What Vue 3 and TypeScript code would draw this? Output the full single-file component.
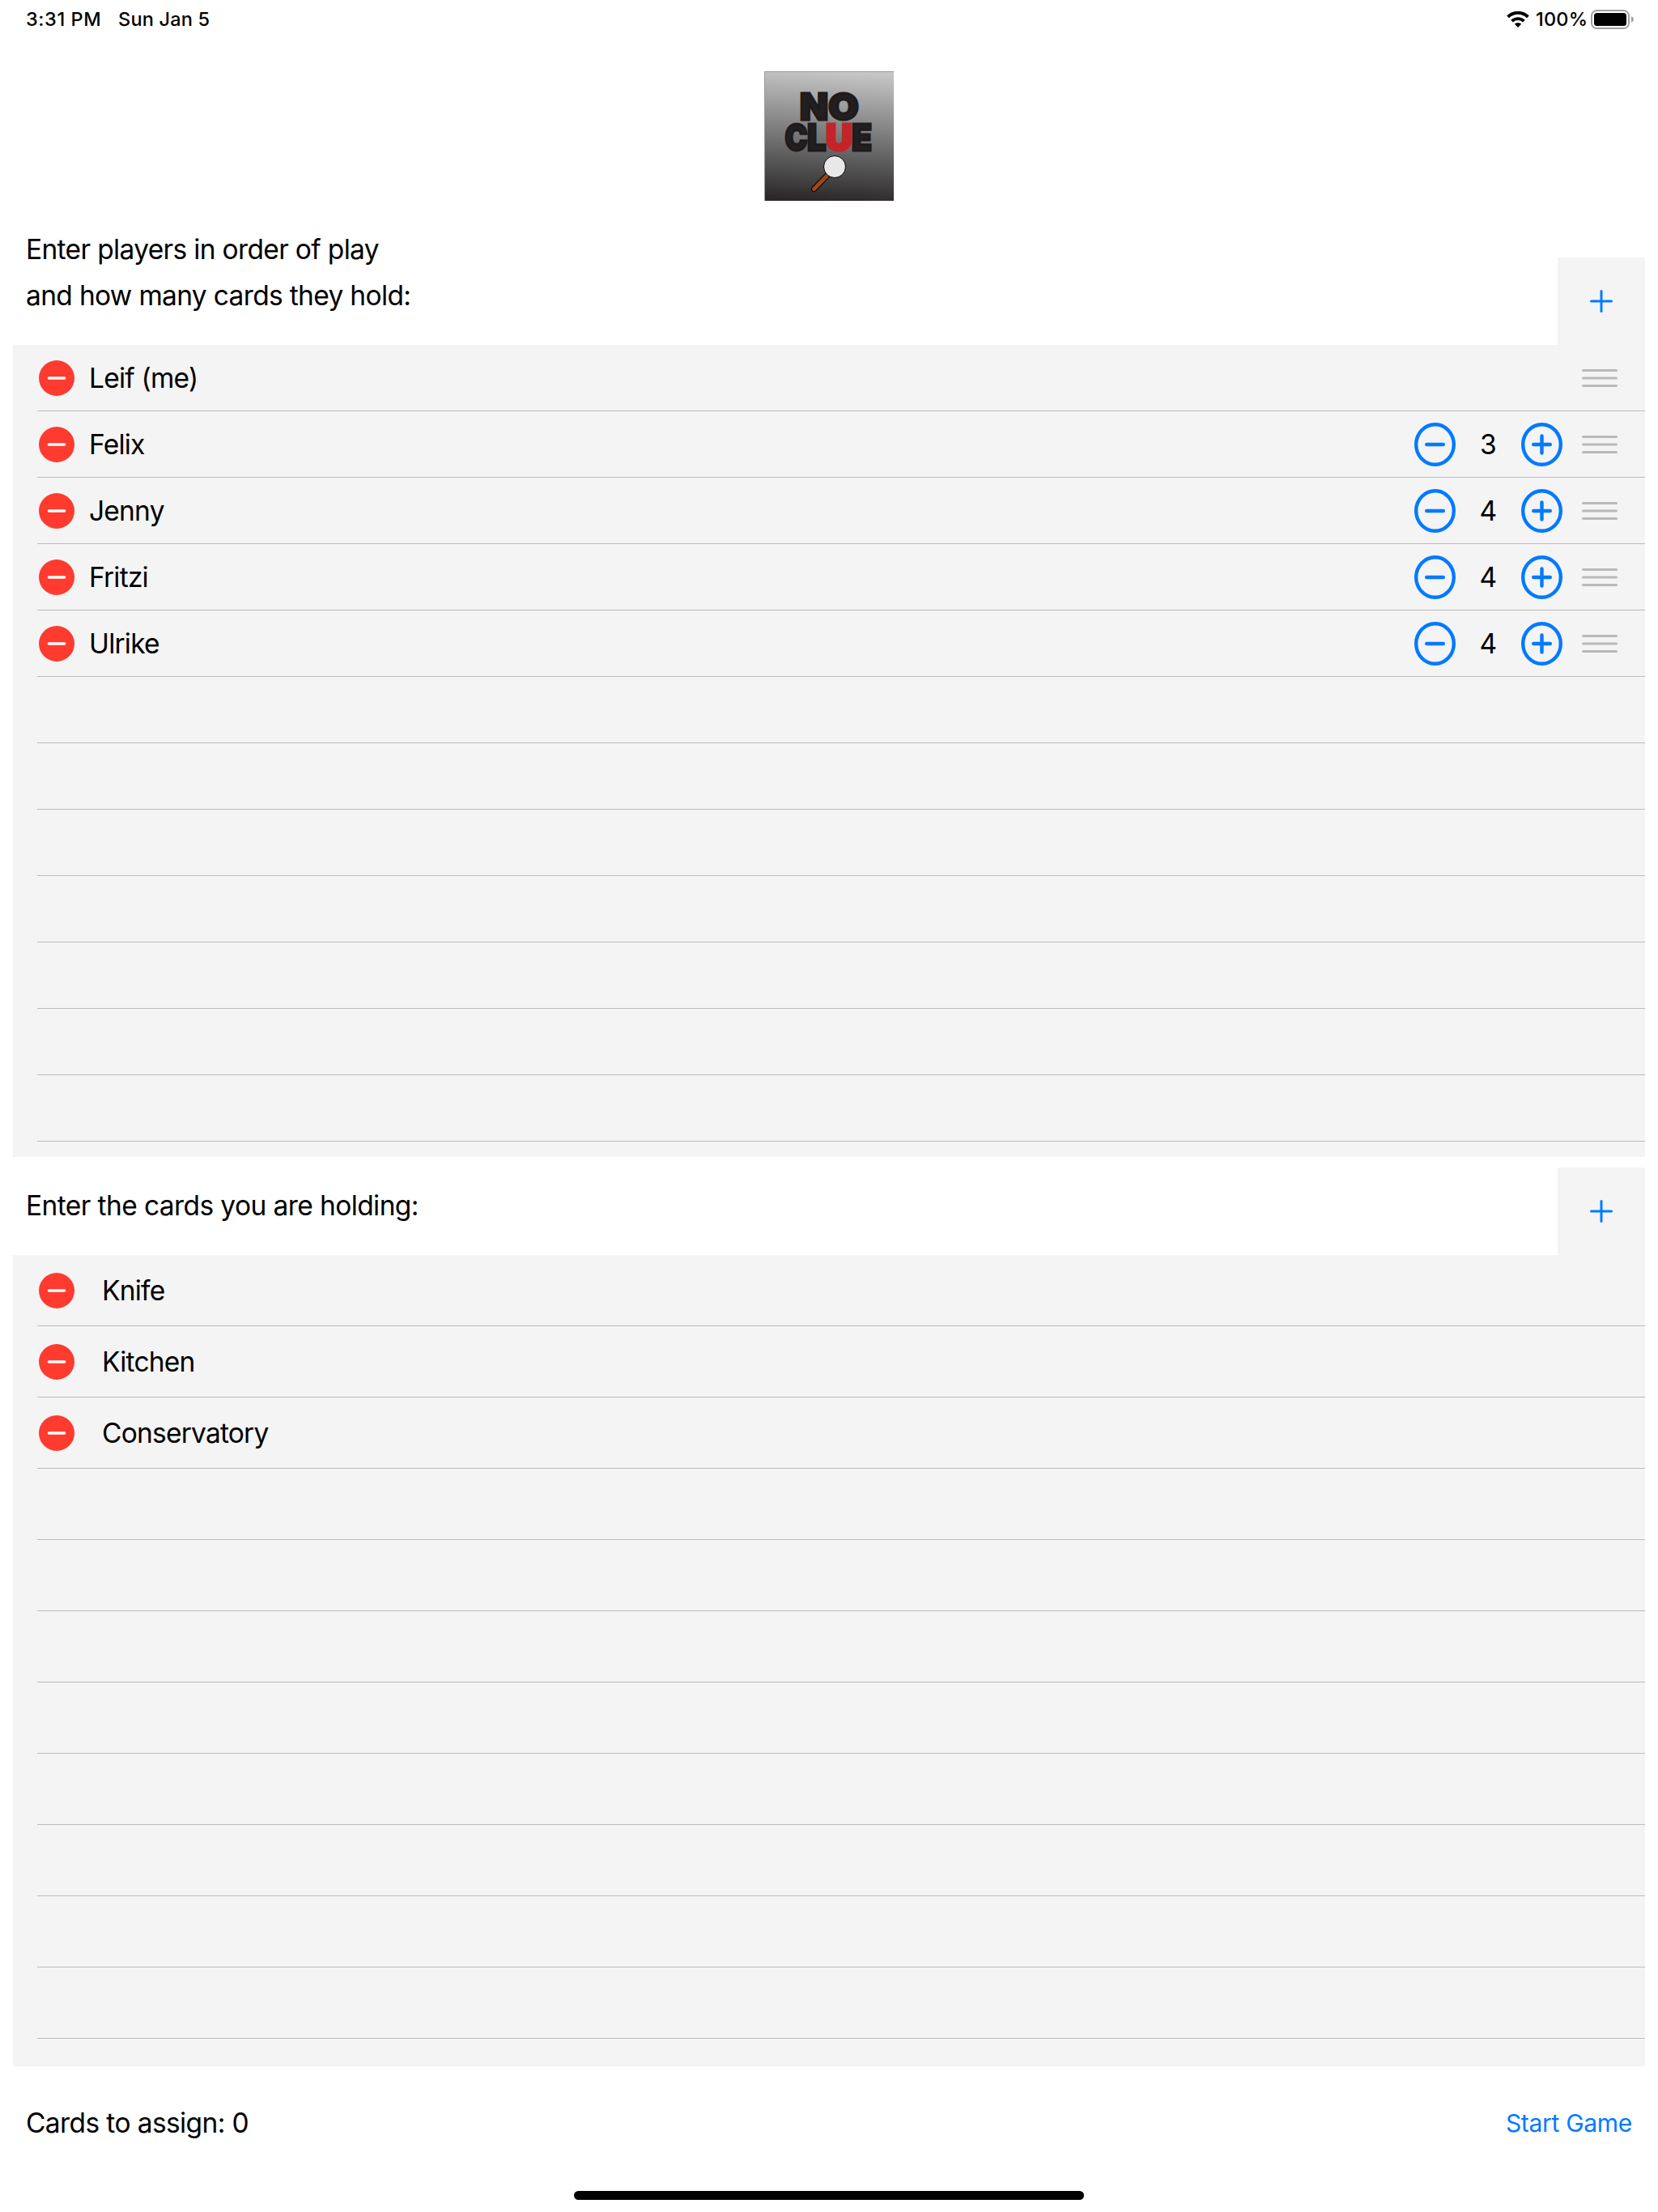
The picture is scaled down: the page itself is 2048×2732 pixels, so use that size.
<script setup lang="ts">
interface Player {
  name: string
  cards?: number
}

const players: Player[] = [
  { name: 'Leif (me)' },
  { name: 'Felix', cards: 3 },
  { name: 'Jenny', cards: 4 },
  { name: 'Fritzi', cards: 4 },
  { name: 'Ulrike', cards: 4 },
]
const cards: string[] = ['Knife', 'Kitchen', 'Conservatory']
const emptyPlayerRows = 7
const emptyCardRows = 8
const unassigned = 0
</script>

<template>
  <div class="screen">
    <header class="status">
      <span class="time">3:31 PM</span>
      <span class="date">Sun Jan 5</span>
      <svg class="wifi" width="28" height="20" viewBox="0 0 28 20">
        <path d="M1.6 6.9A17.6 17.6 0 0 1 26.4 6.9" fill="none" stroke="#000" stroke-width="4" />
        <path d="M6.6 12.1A10.6 10.6 0 0 1 21.4 12.1" fill="none" stroke="#000" stroke-width="3.8" />
        <path d="M14 19.9L9.8 15.6A6 6 0 0 1 18.2 15.6Z" />
      </svg>
      <span class="percent">100%</span>
      <svg class="battery" width="54" height="24" viewBox="0 0 54 24">
        <rect x="1" y="1" width="46" height="22" rx="6.5" fill="none" stroke="#a0a0a0" stroke-width="2" />
        <rect x="4" y="4" width="40" height="16" rx="3.5" />
        <path d="M50 8Q53 9.5 53 12T50 16Z" fill="#a0a0a0" />
      </svg>
    </header>

    <svg class="logo" width="160" height="160" viewBox="0 0 160 160">
      <defs>
        <linearGradient id="shade" x1="0.53" y1="0" x2="0.47" y2="1">
          <stop offset="0" stop-color="#c6c6c6" />
          <stop offset="0.5" stop-color="#787878" />
          <stop offset="0.88" stop-color="#3e3c3c" />
          <stop offset="1" stop-color="#2b2728" />
        </linearGradient>
      </defs>
      <rect width="160" height="160" fill="url(#shade)" />
      <path d="M0.5 160V0.5H160" fill="none" stroke="#999" />
      <g class="letters">
        <text y="59.5">
          <tspan x="44" textLength="35" lengthAdjust="spacingAndGlyphs">N</tspan>
          <tspan x="79.3" textLength="37.4" lengthAdjust="spacingAndGlyphs">O</tspan>
        </text>
        <text y="98">
          <tspan x="25.6" textLength="28" lengthAdjust="spacingAndGlyphs">C</tspan>
          <tspan x="53" textLength="23.4" lengthAdjust="spacingAndGlyphs">L</tspan>
          <tspan x="108" textLength="25" lengthAdjust="spacingAndGlyphs">E</tspan>
          <tspan class="red" x="76" textLength="32.7" lengthAdjust="spacingAndGlyphs">U</tspan>
        </text>
      </g>
      <path d="M77.5 129L61.5 145.5" stroke="#000" stroke-width="7" stroke-linecap="round" />
      <path d="M77.5 129L61.5 145.5" stroke="#a0481a" stroke-width="5" stroke-linecap="round" />
      <circle cx="87" cy="118" r="13.5" fill="#e8e8e8" stroke="#000" />
    </svg>

    <section class="panel players">
      <div class="heading">
        <div class="prompt">
          <p>Enter players in order of play</p>
          <p>and how many cards they hold:</p>
        </div>
        <button class="add">
          <svg width="28" height="28" viewBox="0 0 28 28"><path d="M1.5 14H26.5M14 1.5V26.5" /></svg>
        </button>
      </div>
      <div class="list">
        <div v-for="p in players" :key="p.name" class="row">
          <svg class="delete" width="44" height="44" viewBox="0 0 44 44">
            <circle cx="22" cy="22" r="22" /><path d="M12.5 22H31.5" />
          </svg>
          <span class="name">{{ p.name }}</span>
          <div v-if="p.cards !== undefined" class="stepper">
            <svg width="51" height="54" viewBox="0 0 51 54">
              <ellipse cx="25.5" cy="27" rx="23.3" ry="24.8" /><path d="M15.2 27H35.8" />
            </svg>
            <span class="count">{{ p.cards }}</span>
            <svg width="51" height="54" viewBox="0 0 51 54">
              <ellipse cx="25.5" cy="27" rx="23.3" ry="24.8" /><path d="M15.2 27H35.8M25.5 16.5V37.5" />
            </svg>
          </div>
          <svg class="grip" width="44" height="22" viewBox="0 0 44 22">
            <path d="M1.5 1.5H42.5M1.5 11H42.5M1.5 20.5H42.5" />
          </svg>
        </div>
        <div v-for="n in emptyPlayerRows" :key="n" class="row"></div>
      </div>
    </section>

    <section class="panel hand">
      <div class="heading">
        <div class="prompt"><p>Enter the cards you are holding:</p></div>
        <button class="add">
          <svg width="28" height="28" viewBox="0 0 28 28"><path d="M1.5 14H26.5M14 1.5V26.5" /></svg>
        </button>
      </div>
      <div class="list">
        <div v-for="c in cards" :key="c" class="row">
          <svg class="delete" width="44" height="44" viewBox="0 0 44 44">
            <circle cx="22" cy="22" r="22" /><path d="M12.5 22H31.5" />
          </svg>
          <span class="name">{{ c }}</span>
        </div>
        <div v-for="n in emptyCardRows" :key="n" class="row"></div>
      </div>
    </section>

    <footer class="footer">
      <span>Cards to assign: {{ unassigned }}</span>
      <button class="start">Start Game</button>
    </footer>
    <div class="home"></div>
  </div>
</template>

<style>
body {
  margin: 0;
  background: #fff;
}
</style>

<style scoped>
.screen {
  box-sizing: border-box;
  width: 2048px;
  height: 2732px;
  overflow: hidden;
  display: flex;
  flex-direction: column;
  background: #fff;
  color: #000;
  font-family: Inter, 'Liberation Sans', sans-serif;
  font-size: 33.5px;
  letter-spacing: -0.66px;
}
.status {
  display: flex;
  align-items: center;
  height: 48px;
  padding: 0 29px 0 32px;
  font-size: 23.5px;
  font-weight: 500;
  letter-spacing: 0.2px;
  white-space: nowrap;
}
.status span { padding-bottom: 1px; }
.time {
  width: 114px;
  letter-spacing: 0.6px;
}
.date { flex: 1; }
.wifi { margin-right: 8px; }
.percent { width: 68px; }
.logo {
  display: block;
  flex: none;
  margin: 40px auto 0;
}
.letters {
  font: 900 45px Inter, sans-serif;
  letter-spacing: 0;
  fill: #231f20;
  stroke: #1f1b1c;
  stroke-width: 3;
}
.letters .red {
  fill: #c4232a;
  stroke: #c4232a;
}
.panel {
  display: flex;
  flex-direction: column;
  margin: 0 16px;
}
.heading {
  display: flex;
  justify-content: space-between;
}
.prompt { padding-left: 16px; }
.prompt p {
  margin: 0;
  line-height: 57px;
}
button {
  border: 0;
  padding: 0;
  margin: 0;
  background: none;
  font: inherit;
  letter-spacing: inherit;
  color: #007aff;
}
.add {
  display: flex;
  align-items: center;
  justify-content: center;
  width: 108px;
  height: 108px;
  background: #f4f4f4;
}
.add path {
  stroke: #007aff;
  stroke-width: 3;
  stroke-linecap: round;
}
.players .heading {
  height: 146px;
  margin-top: 32px;
  align-items: flex-end;
}
.players .prompt { align-self: flex-start; }
.hand .heading {
  margin-top: 13px;
}
.hand .prompt {
  padding-top: 19px;
  letter-spacing: -0.59px;
}
.list {
  background: #f4f4f4;
  padding-left: 30px;
}
.players .list { height: 1003px; }
.hand .list { height: 1002px; }
.row {
  box-sizing: border-box;
  display: flex;
  align-items: center;
  height: 82px;
  padding: 1px 34px 0 2px;
  border-bottom: 1px solid #bcbcbe;
}
.hand .row { height: 88px; }
.delete { margin-right: 18px; }
.hand .delete { margin-right: 34px; }
.delete circle { fill: #ff3b30; }
.delete path {
  stroke: #fff;
  stroke-width: 3.6;
  stroke-linecap: round;
}
.name {
  flex: 1;
  letter-spacing: -0.78px;
}
.stepper {
  display: flex;
  align-items: center;
  margin-right: 24px;
}
.stepper svg {
  fill: none;
  stroke: #007aff;
  stroke-width: 4.4;
  stroke-linecap: round;
}
.count {
  box-sizing: border-box;
  width: 81px;
  padding-right: 1px;
  text-align: center;
}
.grip path {
  stroke: #b9b9bb;
  stroke-width: 3;
  stroke-linecap: round;
}
.footer {
  display: flex;
  align-items: center;
  justify-content: space-between;
  height: 140px;
  padding: 0 32px;
  letter-spacing: -0.6px;
}
.start {
  font-size: 30px;
  letter-spacing: -0.3px;
}
.home {
  width: 630px;
  height: 11px;
  margin: 14px auto 0;
  border-radius: 6px;
  background: #000;
}
</style>
